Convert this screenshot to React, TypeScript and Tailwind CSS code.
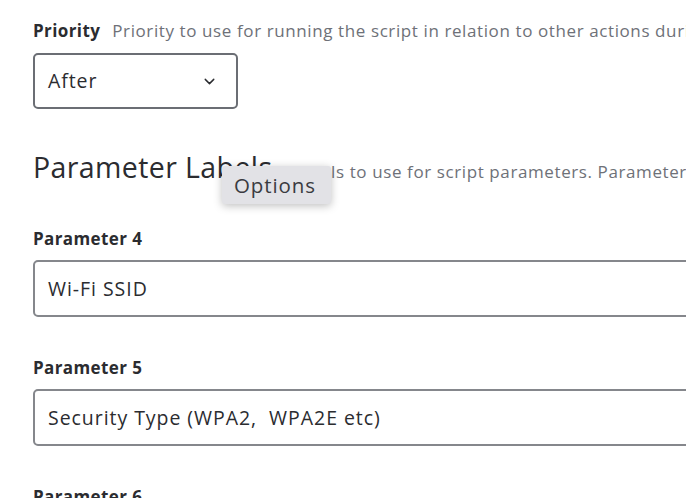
import { ChevronDown } from 'lucide-react';

const font = { fontFamily: '"Open Sans", "Liberation Sans", sans-serif' };

function Field({ label, value }: { label: string; value: string }) {
  return (
    <div className="flex flex-col">
      <label className="text-[17px] font-bold leading-5 tracking-[0.4px] text-[#2b2c30]">{label}</label>
      <div className="mt-[11px] flex h-[57px] w-[800px] items-center whitespace-pre rounded-[5px] border-2 border-[#85878c] px-[13px] text-[19.5px] tracking-[0.95px] text-[#2b2c30]">
        {value}
      </div>
    </div>
  );
}

export default function App() {
  return (
    <div className="h-[498px] w-[686px] overflow-hidden bg-white" style={font}>
      <div className="whitespace-nowrap pl-[33px] pt-[21px]">
        {/* Priority */}
        <div className="flex items-baseline gap-[12px] leading-5">
          <span className="text-[17px] font-bold tracking-[0.4px] text-[#2b2c30]">Priority</span>
          <span className="text-[17px] tracking-[0.6px] text-[#6e7178]">
            Priority to use for running the script in relation to other actions during
          </span>
        </div>
        <div className="mt-[12px] flex h-[56px] w-[205px] items-center justify-between rounded-[5px] border-2 border-[#6b6e74] pl-[13px] pr-[18px] text-[19.5px] tracking-[0.9px] text-[#2b2c30]">
          <span>After</span>
          <ChevronDown className="h-[17px] w-[17px] text-[#2b2c30]" strokeWidth={2} />
        </div>

        {/* Parameter Labels */}
        <div className="relative mt-[40px] flex items-baseline gap-[18px]">
          <h2 className="text-[28.5px] leading-9 tracking-[0.4px] text-[#2b2c30]">Parameter Labels</h2>
          <span className="text-[17px] tracking-[0.6px] text-[#6e7178]">
            Labels to use for script parameters. Parameters 1 through 3 are predefined
          </span>
          <div className="absolute left-[189px] top-[17px] rounded-[3px] bg-[#e2e2e6] pl-[12px] pr-[15px] py-[5px] text-[20.5px] leading-[28px] tracking-[0.9px] text-[#3a3b40] shadow-[0_2px_8px_rgba(0,0,0,0.25)]">
            Options
          </div>
        </div>

        <div className="mt-[44px] flex flex-col gap-[41px]">
          <Field label="Parameter 4" value="Wi-Fi SSID" />
          <Field label="Parameter 5" value="Security Type (WPA2,  WPA2E etc)" />
          <Field label="Parameter 6" value="" />
        </div>
      </div>
    </div>
  );
}
